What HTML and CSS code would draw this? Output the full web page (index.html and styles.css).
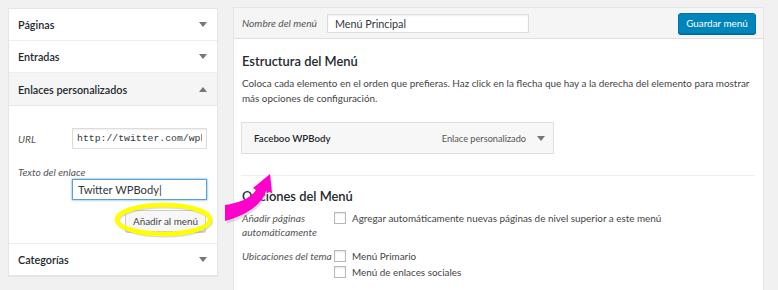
FILE: index.html
```html
<!DOCTYPE html>
<html lang="es">
<head>
    <meta charset="UTF-8">
    <meta name="viewport" content="width=device-width, initial-scale=1.0">
    <title>Menús</title>
    <link rel="stylesheet" href="styles.css">
</head>
<body>
    <div class="page">
        <div class="side">
            <div class="box-head">Páginas <span class="arrow down"></span></div>
            <div class="box-head">Entradas <span class="arrow down"></span></div>
            <div class="box-head open">Enlaces personalizados <span class="arrow up"></span></div>
            <div class="box-body">
                <div class="url-row">
                    <label class="lbl" for="url">URL</label>
                    <input type="text" id="url" class="field mono" value="http://twitter.com/wpbody">
                </div>
                <label class="lbl block" for="txt">Texto del enlace</label>
                <div class="txt-row">
                    <input type="text" id="txt" class="field focus" value="Twitter WPBody|">
                </div>
                <div class="btn-row">
                    <button class="btn">Añadir al menú</button>
                </div>
            </div>
            <div class="box-head last">Categorías <span class="arrow down"></span></div>
        </div>

        <div class="main">
            <div class="main-head">
                <label class="lbl" for="name">Nombre del menú</label>
                <input type="text" id="name" class="field name" value="Menú Principal">
                <button class="btn-primary">Guardar menú</button>
            </div>
            <div class="main-body">
                <h3>Estructura del Menú</h3>
                <p class="desc">Coloca cada elemento en el orden que prefieras. Haz click en la flecha que hay a la derecha del elemento para mostrar más opciones de configuración.</p>
                <div class="item">
                    <span class="item-title">Faceboo WPBody</span>
                    <span class="item-type">Enlace personalizado</span>
                    <span class="arrow down"></span>
                </div>
                <div class="sep"></div>
                <h3 class="opts-title">Opciones del Menú</h3>
                <div class="opt">
                    <div class="opt-lbl">Añadir páginas<br>automáticamente</div>
                    <div class="opt-list">
                        <label class="chk"><span class="box"></span>Agregar automáticamente nuevas páginas de nivel superior a este menú</label>
                    </div>
                </div>
                <div class="opt second">
                    <div class="opt-lbl">Ubicaciones del tema</div>
                    <div class="opt-list">
                        <label class="chk"><span class="box"></span>Menú Primario</label>
                        <label class="chk"><span class="box"></span>Menú de enlaces sociales</label>
                    </div>
                </div>
            </div>
        </div>
    </div>

    <svg class="marks" width="778" height="290" viewBox="0 0 778 290">
        <ellipse cx="164.5" cy="221" rx="46.5" ry="14.5" fill="none" stroke="#999" stroke-width="4" opacity="0.35"/>
        <ellipse cx="163.5" cy="219.5" rx="46.5" ry="14.5" fill="none" stroke="#ffff00" stroke-width="4.5"/>
        <path d="M226,206 C239,204 251,199 257,191 L254,188 L270,175 L272,193 L266,192 C262,206 245,217 226,222 Z" fill="#999" opacity="0.3" transform="translate(1,1.5)"/>
        <path d="M225,205 C238,203 250,199 256,190 L253,188 L270,174 L272,193 L266,191 C262,205 245,216 225,221 Z" fill="#f0c"/>
    </svg>
</body>
</html>
```

FILE: styles.css
```css
body {
    margin: 0;
    background: #f1f1f1;
    font-family: Lato, "Open Sans", sans-serif;
    font-size: 9.9px;
    color: #444;
    overflow: hidden;
}
.page {
    display: flex;
    align-items: flex-start;
    gap: 15px;
    padding: 7px 8px 0 8px;
}

/* left column */
.side {
    width: 210px;
    margin-top: 1px;
    background: #fff;
    border: 1px solid #e5e5e5;
    box-shadow: 0 1px 1px rgba(0,0,0,.04);
    box-sizing: border-box;
}
.box-head {
    display: flex;
    justify-content: space-between;
    align-items: center;
    height: 31px;
    padding: 0 10px 0 9px;
    font-size: 10.8px;
    font-weight: 600;
    color: #23282d;
    border-bottom: 1px solid #eee;
}
.box-head.open {
    height: 32px;
    background: #f5f5f5;
    border-bottom: 1px solid #e5e5e5;
}
.box-head.last {
    border-bottom: none;
}
.arrow {
    width: 0;
    height: 0;
    border-left: 4px solid transparent;
    border-right: 4px solid transparent;
}
.arrow.down {
    border-top: 5px solid #72777c;
}
.arrow.up {
    border-bottom: 5px solid #72777c;
}
.box-body {
    padding: 22px 10px 11px 9px;
    border-bottom: 1px solid #eee;
}
.lbl {
    font-style: italic;
    color: #555;
    font-size: 10.2px;
}
.block {
    display: block;
    margin-top: 17px;
    line-height: 13px;
}
.url-row {
    display: flex;
    justify-content: space-between;
    align-items: center;
}
.field {
    height: 21px;
    box-sizing: border-box;
    border: 1px solid #ddd;
    box-shadow: inset 0 1px 2px rgba(0,0,0,.07);
    padding: 0 5px;
    font-family: Lato, "Open Sans", sans-serif;
    font-size: 11.2px;
    color: #32373c;
    background: #fff;
    outline: none;
}
.url-row .field, .txt-row .field {
    width: 135px;
}
.mono {
    font-family: "Liberation Mono", monospace;
    font-size: 9.8px;
    padding: 0 4px;
}
.focus {
    border-color: #5b9dd9;
    box-shadow: 0 0 2px rgba(30,140,190,.8);
}
.txt-row {
    display: flex;
    justify-content: flex-end;
}
.btn-row {
    display: flex;
    justify-content: flex-end;
    margin-top: 10px;
    padding-right: 1px;
}
.btn {
    width: 81px;
    height: 22px;
    padding: 0;
    font-family: Lato, "Open Sans", sans-serif;
    font-size: 9.9px;
    color: #444;
    background: #f7f7f7;
    border: 1px solid #ccc;
    border-radius: 3px;
    box-shadow: 0 1px 0 #ccc;
}

/* right column */
.main {
    width: 531px;
    height: 283px;
    background: #fff;
    border: 1px solid #e5e5e5;
    border-bottom: none;
    box-sizing: border-box;
}
.main-head {
    display: flex;
    align-items: center;
    height: 30px;
    padding: 0 7px 0 8px;
    background: #f5f5f5;
    border-bottom: 1px solid #dfdfdf;
}
.main-head .lbl {
    margin-right: 10px;
}
.name {
    width: 202px;
    height: 19px;
    font-size: 10.8px;
    padding: 0 7px;
}
.btn-primary {
    margin-left: auto;
    width: 78px;
    height: 21px;
    padding: 0;
    font-family: Lato, "Open Sans", sans-serif;
    font-size: 9.9px;
    color: #fff;
    background: #0085ba;
    border: 1px solid #0073aa;
    border-radius: 3px;
    box-shadow: 0 1px 0 #006799;
}
.main-body {
    padding: 0 8px;
}
h3 {
    margin: 14px 0 0 0;
    font-size: 12.9px;
    font-weight: 600;
    color: #23282d;
    line-height: 16px;
}
.desc {
    margin: 7px 0 0 0;
    line-height: 15px;
    color: #444;
}
.item {
    display: flex;
    align-items: center;
    width: 313px;
    height: 32px;
    margin: 16px 0 0 -1px;
    padding: 0 8px 0 12px;
    box-sizing: border-box;
    background: #f7f7f7;
    border: 1px solid #dfdfdf;
}
.item-title {
    font-weight: 600;
    font-size: 9.7px;
    color: #23282d;
}
.item-type {
    margin-left: auto;
    margin-right: 11px;
    font-size: 9.2px;
    color: #555;
}
.sep {
    height: 1px;
    margin: 21px 0 0 -1px;
    background: #eee;
}
.opts-title {
    margin-top: 12px;
}
.opt {
    display: flex;
    margin-top: 7px;
}
.opt.second {
    margin-top: 10px;
}
.opt-lbl {
    width: 92px;
    flex-shrink: 0;
    white-space: nowrap;
    font-style: italic;
    color: #555;
    font-size: 10.2px;
    line-height: 14px;
}
.opt-list {
    display: flex;
    flex-direction: column;
    gap: 2px;
}
.chk {
    display: flex;
    align-items: center;
    height: 14px;
    color: #444;
}
.box {
    width: 10px;
    height: 10px;
    margin-right: 6px;
    border: 1px solid #b4b9be;
    box-shadow: inset 0 1px 2px rgba(0,0,0,.1);
    background: #fff;
}

/* annotations drawn over the screenshot */
.marks {
    position: absolute;
    left: 0;
    top: 0;
    pointer-events: none;
}
```
